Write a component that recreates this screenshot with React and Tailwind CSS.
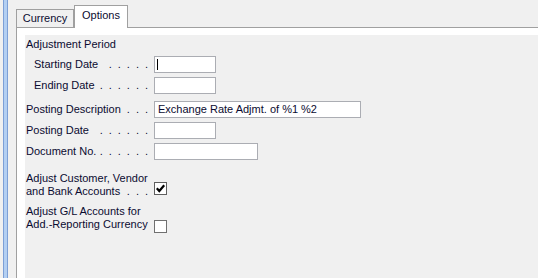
import React from "react";

function Dots({ n }) {
  return (
    <span className="flex-1 flex justify-end gap-[6px] pr-[6px]">
      {Array.from({ length: n }).map((_, i) => (
        <span key={i}>.</span>
      ))}
    </span>
  );
}

function Field({ label, dots, indent, width, value, cursor, mt }) {
  return (
    <div className={`flex items-center h-[17px] ${mt}`}>
      <div className={`w-[129px] flex items-center ${indent ? "pl-[9px]" : "pl-[1px]"}`}>
        <span className="whitespace-nowrap">{label}</span>
        <Dots n={dots} />
      </div>
      <div
        className={`relative h-[17px] bg-white border border-[#abadb3] flex items-center pl-[3px] whitespace-nowrap ${width}`}
      >
        {cursor && <span className="absolute left-[2px] top-[2px] w-px h-[11px] bg-black" />}
        {value}
      </div>
    </div>
  );
}

function Check() {
  return (
    <svg width="11" height="11" viewBox="0 0 11 11">
      <path d="M1.8 5.2 L4.3 8 L9.2 2.3" fill="none" stroke="#000" strokeWidth="2.2" />
    </svg>
  );
}

export default function App() {
  return (
    <div className="w-[538px] h-[278px] overflow-hidden bg-[#f0f0f0] flex font-['Liberation_Sans',Arial,sans-serif] text-[11px] text-[#0b0b30]">
      <div className="ml-[3px] w-[5px] h-full bg-[#b3cff2] border-x border-[#7c9fd6] shrink-0" />
      <div className="flex-1 flex flex-col pl-[8px]">
        <div className="h-[27px] flex items-end shrink-0">
          <div className="h-[18px] w-[58px] border-t border-l border-r border-[#a0a0a0] bg-[#f0f0f0] flex items-center justify-center leading-none">
            Currency
          </div>
          <div className="relative z-10 -mb-px h-[23px] w-[54px] border-t border-l border-r border-[#a0a0a0] bg-white flex items-center justify-center leading-none pb-[3px]">
            Options
          </div>
        </div>
        <div className="flex-1 border-t border-l border-[#a0a0a0] bg-white pl-[8px] pt-[7px] flex">
          <div className="flex-1 bg-[#f0f0f0] flex flex-col">
            <div className="h-[18px] flex items-center pl-[1px]">Adjustment Period</div>
            <Field label="Starting Date" dots={5} indent width="w-[62px]" cursor mt="mt-[3px]" />
            <Field label="Ending Date" dots={6} indent width="w-[62px]" mt="mt-[4px]" />
            <Field
              label="Posting Description"
              dots={3}
              width="w-[207px]"
              value="Exchange Rate Adjmt. of %1 %2"
              mt="mt-[7px]"
            />
            <Field label="Posting Date" dots={6} width="w-[62px]" mt="mt-[4px]" />
            <Field label="Document No." dots={6} width="w-[104px]" mt="mt-[4px]" />

            <div className="flex mt-[12px]">
              <div className="w-[129px] pl-[1px] leading-[13px] flex flex-col">
                <span>Adjust Customer, Vendor</span>
                <span className="flex">
                  <span className="whitespace-nowrap">and Bank Accounts</span>
                  <Dots n={3} />
                </span>
              </div>
              <div className="mt-[10px] w-[13px] h-[13px] bg-white border border-[#5f5f5f] flex items-center justify-center">
                <Check />
              </div>
            </div>

            <div className="flex mt-[7px]">
              <div className="w-[129px] pl-[1px] leading-[13px] flex flex-col">
                <span>Adjust G/L Accounts for</span>
                <span className="whitespace-nowrap">Add.-Reporting Currency</span>
              </div>
              <div className="mt-[15px] w-[13px] h-[13px] bg-white border border-[#707070]" />
            </div>
          </div>
        </div>
      </div>
    </div>
  );
}
